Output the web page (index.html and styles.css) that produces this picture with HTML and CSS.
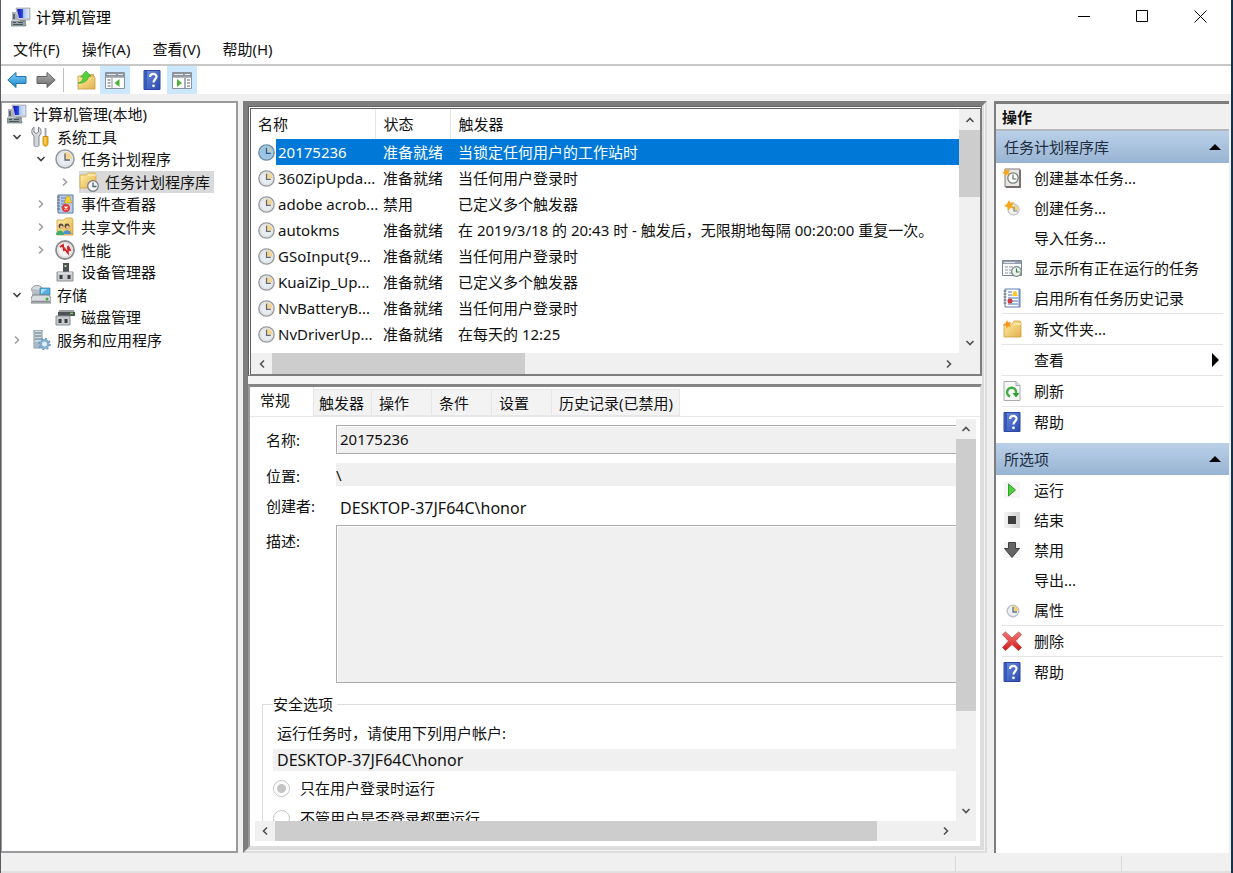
FILE: index.html
```
<!DOCTYPE html>
<html lang="zh-CN">
<head>
<meta charset="utf-8">
<title>计算机管理</title>
<link rel="stylesheet" href="styles.css">
</head>
<body>
<svg class="sprite" aria-hidden="true">
  <defs>
    <linearGradient id="gBlue" x1="0" y1="0" x2="0" y2="1"><stop offset="0" stop-color="#7fd0f5"/><stop offset="1" stop-color="#1a86cf"/></linearGradient>
    <linearGradient id="gGray" x1="0" y1="0" x2="0" y2="1"><stop offset="0" stop-color="#b0b0b0"/><stop offset="1" stop-color="#6a6a6a"/></linearGradient>
    <linearGradient id="gFolder" x1="0" y1="0" x2="1" y2="1"><stop offset="0" stop-color="#fff0a8"/><stop offset="1" stop-color="#e3b04a"/></linearGradient>
    <linearGradient id="gHelp" x1="0" y1="0" x2="1" y2="1"><stop offset="0" stop-color="#6d8fe0"/><stop offset="1" stop-color="#2a49b0"/></linearGradient>
    <linearGradient id="gScreen" x1="0" y1="0" x2="1" y2="0"><stop offset="0" stop-color="#1414b4"/><stop offset=".45" stop-color="#2b45dc"/><stop offset=".55" stop-color="#a8c6f4"/><stop offset="1" stop-color="#dce9fb"/></linearGradient>
    <linearGradient id="gRed" x1="0" y1="0" x2="0" y2="1"><stop offset="0" stop-color="#f47c78"/><stop offset="1" stop-color="#d01818"/></linearGradient>
    <linearGradient id="gBox" x1="0" y1="0" x2="1" y2="0"><stop offset="0" stop-color="#f4f4f4"/><stop offset="1" stop-color="#d2d2d2"/></linearGradient>
  </defs>
  <symbol id="i-computer" viewBox="0 0 20 20">
    <path d="M5 1h14v12H7z" fill="#c9ccd4" stroke="#8d919c" stroke-width=".6"/>
    <path d="M6 2h12v9H8z" fill="url(#gScreen)"/>
    <path d="M1 5h4l2 8H1z" fill="#a9b0ba"/><path d="M2 7h2v5H2z" fill="#5d6671"/>
    <path d="M9 13h6v2H9z" fill="#9b9fa6"/>
    <path d="M0 14h14l1 5H0z" fill="#97a3a4" stroke="#6e7b7c" stroke-width=".7"/>
    <path d="M2 15.5h3M7 15.5h5M2 17.5h10" stroke="#46555c" stroke-width="1"/>
  </symbol>
  <symbol id="i-back" viewBox="0 0 20 20"><path d="M.8 10 9 2.5V6.500h10v7H9v4z" fill="url(#gBlue)" stroke="#2672a6"/></symbol>
  <symbol id="i-forward" viewBox="0 0 20 20"><path d="M19.200 10 11 2.500v4H1v7h10v4z" fill="url(#gGray)" stroke="#606060"/></symbol>
  <symbol id="i-upfolder" viewBox="0 0 20 20">
    <path d="M2 6h16l1 2v11H2z" fill="url(#gFolder)" stroke="#c79b3d" stroke-width=".8"/>
    <path d="M12 4h6v3h-6z" fill="#d9b568"/>
    <path d="M2 13c4-1 5-4 5-6L4.500 7 10 1l5 5-2.500.5C12 11 7 14 2 13z" fill="#58cf3c" stroke="#379e24" stroke-width=".6"/>
  </symbol>
  <symbol id="i-paneleft" viewBox="0 0 20 17">
    <path d="M.5.500h19v16H.5z" fill="#fff" stroke="#8a929c"/><path d="M1 1h18v3.500H1z" fill="#8d959f"/><path d="M2 2.500h9M13 2.500h5" stroke="#e4e8ec"/>
    <path d="M1 5h18" stroke="#6c747e"/><path d="M7 6v10" stroke="#8a929c"/><path d="M2.500 8h3M2.500 11h3M2.500 14h3" stroke="#58616c"/>
    <path d="M14.500 7v8L9.500 11z" fill="#4eb23b"/>
  </symbol>
  <symbol id="i-paneright" viewBox="0 0 20 17">
    <path d="M.5.500h19v16H.5z" fill="#fff" stroke="#8a929c"/><path d="M1 1h18v3.500H1z" fill="#8d959f"/><path d="M2 2.500h9M13 2.500h5" stroke="#e4e8ec"/>
    <path d="M1 5h18" stroke="#6c747e"/><path d="M13 6v10" stroke="#8a929c" stroke-width="1.500"/><path d="M15 8h3M15 11h3M15 14h3" stroke="#58616c"/>
    <path d="M5 7v8l5-4z" fill="#4eb23b"/>
  </symbol>
  <symbol id="i-help" viewBox="0 0 20 20">
    <path d="M2 .5h16v19H2z" fill="url(#gHelp)" stroke="#2d479f"/><path d="M2.500 1h2.500v18H2.500z" fill="#3658b8"/>
    <path d="M8 7c0-4 6.500-4 6.500-.5 0 2.800-3 3-3 6" fill="none" stroke="#fff" stroke-width="2.200"/><circle cx="11.500" cy="15.800" r="1.400" fill="#fff"/>
  </symbol>
  <symbol id="i-tools" viewBox="0 0 20 20">
    <path d="M3 0v5l2 1.500L7.500 5V0C11 2 11 7 8 9v9c0 2.500-5 2.500-5 0V9C0 7 0 2 3 0z" fill="#d3d6da" stroke="#85898f"/>
    <path d="M13.500 1h2v9h-2z" fill="#a2a7ac"/><path d="M12 9.500h5v7c0 3.500-5 3.500-5 0z" fill="#f4b81e" stroke="#c07d0b" stroke-width=".8"/><path d="M14 10v7" stroke="#ffe489"/>
  </symbol>
  <symbol id="i-clock" viewBox="0 0 20 20">
    <circle cx="10" cy="10" r="9" fill="#f1f2f4" stroke="#96999f" stroke-width="1.600"/><circle cx="10" cy="10" r="7" fill="#e7edf3" stroke="#cdd2d8" stroke-width=".7"/>
    <path d="M10 10V3a7 7 0 0 1 7 7z" fill="#f3d58f"/><path d="M10 4.500V11h5" fill="none" stroke="#626770" stroke-width="1.400"/>
  </symbol>
  <symbol id="i-clocksel" viewBox="0 0 20 20">
    <circle cx="10" cy="10" r="9" fill="#a8cbe8" stroke="#6a8cab" stroke-width="1.600"/><circle cx="10" cy="10" r="7" fill="#9bc3e3"/>
    <path d="M10 10V3a7 7 0 0 1 7 7z" fill="#b9ccc4"/><path d="M10 4.500V11h5" fill="none" stroke="#2f5f8c" stroke-width="1.500"/>
  </symbol>
  <symbol id="i-folderclock" viewBox="0 0 20 20">
    <path d="M1 3h6l2-2h7l1 2v13H1z" fill="url(#gFolder)" stroke="#d2a448" stroke-width=".8"/><path d="M9 3h8" stroke="#fff7cf"/>
    <circle cx="14" cy="14" r="5.300" fill="#f4f5f7" stroke="#747b85" stroke-width="1.200"/><path d="M14 10.500V14.500h3.500" fill="none" stroke="#4d6272" stroke-width="1.300"/>
  </symbol>
  <symbol id="i-event" viewBox="0 0 20 20">
    <path d="M3 1h15v18H3z" fill="#b9cdea" stroke="#5f7a9f"/><path d="M2 3h3M2 6h3M2 9h3M2 12h3M2 15h3" stroke="#5c6470" stroke-width="1.200"/>
    <path d="M6 4h5M6 7h4M6 10h5M6 13h4" stroke="#5b7fc4"/><path d="M13 2c3 0 2 5 4 7H9c2-2 1-7 4-7z" fill="#f4d22c" stroke="#b8952a" stroke-width=".6"/>
    <circle cx="11" cy="14" r="4" fill="#e13a36"/><path d="M9.500 12.500l3 3m0-3-3 3" stroke="#fff" stroke-width="1.200"/>
  </symbol>
  <symbol id="i-share" viewBox="0 0 20 20">
    <path d="M2 3h7l2-2h6l1 2v15H2z" fill="url(#gFolder)" stroke="#cfa245" stroke-width=".8"/>
    <circle cx="6" cy="9" r="2.500" fill="#5b4a3b"/><circle cx="12" cy="9" r="2.500" fill="#5b4a3b"/><circle cx="6.500" cy="10" r="1.500" fill="#f0c49c"/><circle cx="12.500" cy="10" r="1.500" fill="#f0c49c"/>
    <path d="M1 18c0-6 8-6 8 0z" fill="#3fae72"/><path d="M8 17c0-5 8-5 8 0z" fill="#4a8fd0"/>
  </symbol>
  <symbol id="i-perf" viewBox="0 0 20 20">
    <circle cx="10" cy="10" r="9" fill="#fff" stroke="#888b90" stroke-width="1.800"/><circle cx="10" cy="10" r="7.200" fill="#f7f2f2" stroke="#cdb9b9" stroke-width=".6"/>
    <path d="M5 7l3-2 1 6M7 5.500l6 7.500V6l2.500 5" fill="none" stroke="#d81e1e" stroke-width="1.700"/>
  </symbol>
  <symbol id="i-device" viewBox="0 0 20 20">
    <path d="M8 1h6v10H8z" fill="#4d5154"/><path d="M9.500 3h2v2h-2z" fill="#b7d6a0"/>
    <path d="M2 10h16v9H2z" fill="#c8cacd" stroke="#8b8e92"/><path d="M4.500 13h3v4h-3zM12.500 13h3v4h-3z" fill="#3b3e41"/><path d="M3 11h14" stroke="#f3f3f3"/>
  </symbol>
  <symbol id="i-storage" viewBox="0 0 20 20">
    <ellipse cx="6" cy="4.500" rx="5.500" ry="4" fill="#d8dce0" stroke="#979ca3"/><path d="M1 4v6h9V5z" fill="#b8bdc4"/>
    <path d="M9 3h10v7H9z" fill="#55aee0" stroke="#2f7cae" stroke-width=".7"/><path d="M10 4h6l-6 5z" fill="#a6dcf6"/>
    <path d="M2 10h16l2 3v5H0v-5z" fill="#dadcdf" stroke="#7e8287"/><path d="M1 16.500h18" stroke="#8a8d91" stroke-width="1.500"/><circle cx="16" cy="14" r="1.500" fill="#3fae35"/>
  </symbol>
  <symbol id="i-disk" viewBox="0 0 20 20">
    <path d="M4 3h15l1 5H3z" fill="#9ba0a5"/><path d="M3 5h17v4H3z" fill="#4c5155"/><path d="M15 6.500h3" stroke="#7cd05a" stroke-width="1.500"/>
    <path d="M1 9h14v9H1z" fill="#c8cacd" stroke="#8b8e92"/><path d="M3.500 12h3v4h-3zM9.500 12h3v4h-3z" fill="#3b3e41"/>
  </symbol>
  <symbol id="i-services" viewBox="0 0 20 20">
    <path d="M3 0h8v18H3z" fill="#ccd8df" stroke="#7f919c"/><path d="M4 3h6M4 6h6M4 9h6" stroke="#657782" stroke-width="1.200"/><path d="M4 12h6v5H4z" fill="#a9bbc5"/>
    <circle cx="13.500" cy="14" r="3.800" fill="#e4eef6" stroke="#7faed0" stroke-width="2.600"/><circle cx="13.500" cy="14" r="5.500" fill="none" stroke="#6898bd" stroke-width="1.600" stroke-dasharray="2 2.300"/>
  </symbol>
  <symbol id="i-newbasic" viewBox="0 0 20 20">
    <path d="M3 1h15v18H3z" fill="#e9e6e4" stroke="#82797a"/><path d="M18 2v17H4" fill="none" stroke="#756b6c" stroke-width="1.800"/>
    <circle cx="11" cy="10" r="5.200" fill="#fff" stroke="#73817d" stroke-width="1.300"/><path d="M11 6.500V11h3.500" fill="none" stroke="#55705f" stroke-width="1.200"/>
    <path d="M4 0l1 2.500L8 2 6.500 4.500 8 7 5 6.200 3.500 9 3 6 0 5l2.600-1.500z" fill="#f7a51d"/>
  </symbol>
  <symbol id="i-newtask" viewBox="0 0 20 20">
    <circle cx="11.500" cy="11.500" r="5.500" fill="#f6f2ea" stroke="#bfc6cd" stroke-width="1.300"/><path d="M12 12V7a5 5 0 0 1 5 5z" fill="#f2d48b"/><path d="M12 8.500V13h3.500" fill="none" stroke="#6e7d8a" stroke-width="1.200"/>
    <path d="M7 2l1.400 2.800L12 4l-1.800 3.500L12 11 8.500 9.700 6 13 5.400 9.200 2 8l3-2z" fill="#f7a51d"/>
  </symbol>
  <symbol id="i-running" viewBox="0 0 20 20">
    <path d="M.5 2.500h19v15H.5z" fill="#fbfbfc" stroke="#7f8794"/><path d="M1 3h18v3H1z" fill="#96a0ae"/><path d="M2 4.500h11" stroke="#dfe4ea"/>
    <path d="M3 9h3M7 9h4M12 9h5M3 12h3M7 12h3M3 15h3M7 15h3" stroke="#8b94a2"/>
    <circle cx="14.500" cy="13.500" r="4.800" fill="#f0f3f0" stroke="#778a84" stroke-width="1.200"/><path d="M14.500 10.500V14h3" fill="none" stroke="#2f8046" stroke-width="1.200"/>
  </symbol>
  <symbol id="i-history" viewBox="0 0 20 20">
    <path d="M3 1h15v18H3z" fill="#fff" stroke="#5f7fb4"/><path d="M16.500 1H18v18h-1.500z" fill="#6d8fc8"/><path d="M1.500 3h3M1.500 6h3M1.500 9h3M1.500 12h3M1.500 15h3" stroke="#5c6470" stroke-width="1.200"/>
    <path d="M6 4h4M6 7h4M6 10h10M6 13h10M6 16h10" stroke="#4c6eb0"/><path d="M13 3c2.500 0 1.500 3 3 5h-6c1.500-2 .5-5 3-5z" fill="#f8c928"/><circle cx="8" cy="13" r="2.500" fill="#d63a36"/>
  </symbol>
  <symbol id="i-newfolder" viewBox="0 0 20 20">
    <path d="M2 5h8l2-3h6l1 2v14H2z" fill="url(#gFolder)" stroke="#d2a043" stroke-width=".8"/><path d="M11 5h8" stroke="#fff3bd" stroke-width="1.300"/>
    <path d="M5 1l1.200 2.500L9 3 7.600 5.500 9 8 6 7.200 4.500 10 4 7 1 6l2.600-1.500z" fill="#f7951d"/>
  </symbol>
  <symbol id="i-refresh" viewBox="0 0 20 20">
    <path d="M2 .5h12l4 4v15H2z" fill="#f6f7f6" stroke="#a6abad"/><path d="M14 .5v4h4" fill="#dfe3e4" stroke="#a6abad"/>
    <path d="M8 15.500A4.500 4.500 0 1 1 14 12" fill="none" stroke="#3fae42" stroke-width="2.500"/><path d="M10.500 12h7L14 16.500z" fill="#2f9c34"/>
  </symbol>
  <symbol id="i-run" viewBox="0 0 20 20"><path d="M2 2h16v16H2z" fill="#f5f5f5"/><path d="M6.500 4v12l7-6z" fill="#52cf3c" stroke="#2f9e2c"/></symbol>
  <symbol id="i-end" viewBox="0 0 20 20"><path d="M2 2h16v16H2z" fill="url(#gBox)"/><path d="M6 6h8v8H6z" fill="#3d3d3d"/></symbol>
  <symbol id="i-disable" viewBox="0 0 20 20"><path d="M2 2h16v16H2z" fill="#f5f5f5"/><path d="M6.500 2.500h7v6h4L10 17.500 2.500 8.500h4z" fill="#646464" stroke="#3f3f3f"/></symbol>
  <symbol id="i-props" viewBox="0 0 20 20">
    <circle cx="11" cy="11" r="5.800" fill="#edf0f3" stroke="#b9c2cc" stroke-width="1.400"/><path d="M11 11V5.500a5.500 5.500 0 0 1 5.500 5.500z" fill="#f3cf80"/><path d="M11 7v5h4" fill="none" stroke="#60758c" stroke-width="1.300"/>
  </symbol>
  <symbol id="i-delete" viewBox="0 0 20 20"><path d="M3.500 1 10 7l6.500-6L19.500 3.500 13.500 10l6 6.500-3 3L10 13.500l-6.500 6-3-3 6-6.500-6-6.500z" fill="url(#gRed)" stroke="#b53030" stroke-width=".7" stroke-linejoin="round"/></symbol>
  <symbol id="a-up" viewBox="0 0 10 10"><path d="M1.500 7 5 3.500 8.500 7" fill="none" stroke="currentColor" stroke-width="1.600"/></symbol>
  <symbol id="a-down" viewBox="0 0 10 10"><path d="M1.500 3 5 6.500 8.500 3" fill="none" stroke="currentColor" stroke-width="1.600"/></symbol>
  <symbol id="a-left" viewBox="0 0 10 10"><path d="M7 1.500 3.500 5 7 8.500" fill="none" stroke="currentColor" stroke-width="1.600"/></symbol>
  <symbol id="a-right" viewBox="0 0 10 10"><path d="M3 1.500 6.500 5 3 8.500" fill="none" stroke="currentColor" stroke-width="1.600"/></symbol>
</svg>

<div class="window">
  <header class="titlebar">
    <svg class="icon"><use href="#i-computer"/></svg>
    <h1 class="title">计算机管理</h1>
    <div class="controls">
      <button class="control" aria-label="最小化"><svg class="glyph" viewBox="0 0 13 13"><path d="M0 6.500h12"/></svg></button>
      <button class="control" aria-label="最大化"><svg class="glyph" viewBox="0 0 13 13"><path d="M.5.500h11v11H.5z"/></svg></button>
      <button class="control" aria-label="关闭"><svg class="glyph" viewBox="0 0 13 13"><path d="M.5.500l12 12M12.500.500l-12 12"/></svg></button>
    </div>
  </header>
  <nav class="menubar">
    <button class="menu">文件(F)</button>
    <button class="menu">操作(A)</button>
    <button class="menu">查看(V)</button>
    <button class="menu">帮助(H)</button>
  </nav>
  <div class="toolbar">
    <button class="tool" aria-label="后退"><svg class="icon"><use href="#i-back"/></svg></button>
    <button class="tool" aria-label="前进"><svg class="icon"><use href="#i-forward"/></svg></button>
    <span class="tool-sep"></span>
    <button class="tool" aria-label="上移"><svg class="icon"><use href="#i-upfolder"/></svg></button>
    <button class="tool on" aria-label="显示控制台树"><svg class="icon"><use href="#i-paneleft"/></svg></button>
    <button class="tool book" aria-label="帮助"><svg class="icon"><use href="#i-help"/></svg></button>
    <button class="tool on" aria-label="显示操作窗格"><svg class="icon"><use href="#i-paneright"/></svg></button>
  </div>

  <main class="workspace">
    <aside class="tree-pane">
      <div class="tree" role="tree">
        <div class="node root" role="treeitem"><svg class="icon"><use href="#i-computer"/></svg><span>计算机管理(本地)</span></div>
        <div class="node" role="treeitem"><button class="twist open" aria-label="折叠"><svg class="arrow"><use href="#a-down"/></svg></button><svg class="icon"><use href="#i-tools"/></svg><span>系统工具</span></div>
        <div class="node l2" role="treeitem"><button class="twist open" aria-label="折叠"><svg class="arrow"><use href="#a-down"/></svg></button><svg class="icon"><use href="#i-clock"/></svg><span>任务计划程序</span></div>
        <div class="node l3" role="treeitem" aria-selected="true"><button class="twist" aria-label="展开"><svg class="arrow"><use href="#a-right"/></svg></button><span class="selected"><svg class="icon"><use href="#i-folderclock"/></svg><span>任务计划程序库</span></span></div>
        <div class="node l2" role="treeitem"><button class="twist" aria-label="展开"><svg class="arrow"><use href="#a-right"/></svg></button><svg class="icon"><use href="#i-event"/></svg><span>事件查看器</span></div>
        <div class="node l2" role="treeitem"><button class="twist" aria-label="展开"><svg class="arrow"><use href="#a-right"/></svg></button><svg class="icon"><use href="#i-share"/></svg><span>共享文件夹</span></div>
        <div class="node l2" role="treeitem"><button class="twist" aria-label="展开"><svg class="arrow"><use href="#a-right"/></svg></button><svg class="icon"><use href="#i-perf"/></svg><span>性能</span></div>
        <div class="node l2" role="treeitem"><span class="twist"></span><svg class="icon"><use href="#i-device"/></svg><span>设备管理器</span></div>
        <div class="node" role="treeitem"><button class="twist open" aria-label="折叠"><svg class="arrow"><use href="#a-down"/></svg></button><svg class="icon"><use href="#i-storage"/></svg><span>存储</span></div>
        <div class="node l2" role="treeitem"><span class="twist"></span><svg class="icon"><use href="#i-disk"/></svg><span>磁盘管理</span></div>
        <div class="node" role="treeitem"><button class="twist" aria-label="展开"><svg class="arrow"><use href="#a-right"/></svg></button><svg class="icon"><use href="#i-services"/></svg><span>服务和应用程序</span></div>
      </div>
    </aside>

    <section class="center">
      <div class="list-pane">
        <div class="list-view">
          <table class="tasks">
            <colgroup><col class="c-icon"><col class="c-name"><col class="c-state"><col></colgroup>
            <thead><tr><th colspan="2" class="first">名称</th><th>状态</th><th>触发器</th></tr></thead>
            <tbody>
              <tr class="active"><td class="ic"><svg class="icon small"><use href="#i-clocksel"/></svg></td><td class="nm">20175236</td><td>准备就绪</td><td>当锁定任何用户的工作站时</td></tr>
              <tr><td class="ic"><svg class="icon small"><use href="#i-clock"/></svg></td><td class="nm">360ZipUpda...</td><td>准备就绪</td><td>当任何用户登录时</td></tr>
              <tr><td class="ic"><svg class="icon small"><use href="#i-clock"/></svg></td><td class="nm">adobe acrob...</td><td>禁用</td><td>已定义多个触发器</td></tr>
              <tr><td class="ic"><svg class="icon small"><use href="#i-clock"/></svg></td><td class="nm">autokms</td><td>准备就绪</td><td>在 2019/3/18 的 20:43 时 - 触发后，无限期地每隔 00:20:00 重复一次。</td></tr>
              <tr><td class="ic"><svg class="icon small"><use href="#i-clock"/></svg></td><td class="nm">GSoInput{9...</td><td>准备就绪</td><td>当任何用户登录时</td></tr>
              <tr><td class="ic"><svg class="icon small"><use href="#i-clock"/></svg></td><td class="nm">KuaiZip_Up...</td><td>准备就绪</td><td>已定义多个触发器</td></tr>
              <tr><td class="ic"><svg class="icon small"><use href="#i-clock"/></svg></td><td class="nm">NvBatteryB...</td><td>准备就绪</td><td>当任何用户登录时</td></tr>
              <tr><td class="ic"><svg class="icon small"><use href="#i-clock"/></svg></td><td class="nm">NvDriverUp...</td><td>准备就绪</td><td>在每天的 12:25</td></tr>
            </tbody>
          </table>
        </div>
        <div class="vbar"><button class="step" aria-label="向上"><svg class="arrow"><use href="#a-up"/></svg></button><div class="track"><div class="thumb list-v"></div></div><button class="step" aria-label="向下"><svg class="arrow"><use href="#a-down"/></svg></button></div>
        <div class="hbar"><button class="step" aria-label="向左"><svg class="arrow"><use href="#a-left"/></svg></button><div class="track"><div class="thumb list-h"></div></div><button class="step" aria-label="向右"><svg class="arrow"><use href="#a-right"/></svg></button></div>
        <div class="corner"></div>
      </div>

      <div class="detail-pane">
        <div class="tabs" role="tablist">
          <button class="tab current" role="tab" aria-selected="true">常规</button>
          <button class="tab tight" role="tab">触发器</button>
          <button class="tab" role="tab">操作</button>
          <button class="tab" role="tab">条件</button>
          <button class="tab" role="tab">设置</button>
          <button class="tab long" role="tab">历史记录(已禁用)</button>
        </div>
        <div class="detail-body">
          <form class="form-view">
            <div class="fields">
              <label for="f-name">名称:</label><input id="f-name" class="box" value="20175236" readonly>
              <label for="f-place" class="low">位置:</label><input id="f-place" class="flat" value="\" readonly>
              <label for="f-author">创建者:</label><output id="f-author" class="author">DESKTOP-37JF64C\honor</output>
              <label for="f-desc" class="top">描述:</label><textarea id="f-desc" class="desc" readonly></textarea>
            </div>
            <fieldset class="security">
              <legend>安全选项</legend>
              <label class="hint" for="f-user">运行任务时，请使用下列用户帐户:</label>
              <input id="f-user" class="user" value="DESKTOP-37JF64C\honor" readonly>
              <label class="option"><input type="radio" name="logon" checked disabled>只在用户登录时运行</label>
              <label class="option"><input type="radio" name="logon" disabled>不管用户是否登录都要运行</label>
            </fieldset>
          </form>
          <div class="vbar"><button class="step" aria-label="向上"><svg class="arrow"><use href="#a-up"/></svg></button><div class="track"><div class="thumb form-v"></div></div><button class="step" aria-label="向下"><svg class="arrow"><use href="#a-down"/></svg></button></div>
          <div class="hbar"><button class="step" aria-label="向左"><svg class="arrow"><use href="#a-left"/></svg></button><div class="track"><div class="thumb form-h"></div></div><button class="step" aria-label="向右"><svg class="arrow"><use href="#a-right"/></svg></button></div>
          <div class="corner"></div>
        </div>
      </div>
    </section>

    <aside class="actions">
      <h2 class="actions-title">操作</h2>
      <button class="group">任务计划程序库<span class="tri-up"></span></button>
      <div class="items">
        <button class="item"><svg class="icon"><use href="#i-newbasic"/></svg>创建基本任务...</button>
        <button class="item"><svg class="icon"><use href="#i-newtask"/></svg>创建任务...</button>
        <button class="item"><span class="icon"></span>导入任务...</button>
        <button class="item"><svg class="icon"><use href="#i-running"/></svg>显示所有正在运行的任务</button>
        <button class="item"><svg class="icon"><use href="#i-history"/></svg>启用所有任务历史记录</button>
        <hr>
        <button class="item"><svg class="icon"><use href="#i-newfolder"/></svg>新文件夹...</button>
        <hr>
        <button class="item"><span class="icon"></span>查看<span class="tri-right"></span></button>
        <hr>
        <button class="item"><svg class="icon"><use href="#i-refresh"/></svg>刷新</button>
        <hr>
        <button class="item"><svg class="icon"><use href="#i-help"/></svg>帮助</button>
      </div>
      <button class="group">所选项<span class="tri-up"></span></button>
      <div class="items">
        <button class="item"><svg class="icon"><use href="#i-run"/></svg>运行</button>
        <button class="item"><svg class="icon"><use href="#i-end"/></svg>结束</button>
        <button class="item"><svg class="icon"><use href="#i-disable"/></svg>禁用</button>
        <button class="item"><span class="icon"></span>导出...</button>
        <button class="item"><svg class="icon"><use href="#i-props"/></svg>属性</button>
        <hr>
        <button class="item"><svg class="icon"><use href="#i-delete"/></svg>删除</button>
        <hr>
        <button class="item"><svg class="icon"><use href="#i-help"/></svg>帮助</button>
      </div>
    </aside>
  </main>
  <footer class="status"><span class="cell wide"></span><span class="cell"></span><span class="cell last"></span></footer>
</div>
</body>
</html>
```
FILE: styles.css
```
* { box-sizing: border-box; }

body {
  margin: 0;
  background: #f0f0f0;
  color: #111;
  font: 15px/20px "Noto Sans", "Noto Sans CJK SC", sans-serif;
}

button, input, textarea { font: inherit; color: inherit; }
button { border: 0; padding: 0; margin: 0; background: none; }

.sprite { position: absolute; width: 0; height: 0; }
.icon { width: 20px; height: 20px; flex: none; }
.icon.small { width: 17px; height: 17px; display: block; }
.arrow { width: 10px; height: 10px; display: block; }

.window {
  display: flex;
  flex-direction: column;
  height: 100vh;
  border-left: 1px solid #5a5a62;
  border-right: 2px solid #16324a;
  background: #f0f0f0;
}

/* Title, menu and tool bars */
.titlebar { display: flex; align-items: center; gap: 5px; height: 33px; padding-left: 10px; background: #fff; }
.title { margin: 0; font-size: 15px; font-weight: 400; color: #000; }
.controls { display: flex; margin: 0 2px 0 auto; }
.control { width: 58px; height: 33px; display: flex; align-items: center; justify-content: center; }
.glyph { width: 13px; height: 13px; fill: none; stroke: #000; }

.menubar { display: flex; gap: 22px; height: 33px; padding: 1px 12px 0; background: #fff; border-bottom: 2px solid #c8c8c8; }
.toolbar { display: flex; align-items: center; height: 28px; padding-left: 1px; background: #fff; }
.tool { width: 29px; height: 28px; display: flex; align-items: center; justify-content: center; }
.tool.on { width: 30px; background: #cce8ff; }
.tool.on .icon { height: 17px; }
.tool.book { width: 37px; padding-left: 6px; }
.tool-sep { width: 1px; height: 24px; margin: 0 7px 0 3px; background: #bdbdbd; }

.workspace {
  flex: 1;
  min-height: 0;
  display: grid;
  grid-template-columns: 237px minmax(0, 1fr) 235px;
  grid-template-rows: minmax(0, 1fr);
  gap: 5px;
  padding: 7px 2px 0 0;
}

/* Console tree */
.tree-pane { background: #fff; border: 2px solid #9a9a9c; border-left-width: 1px; overflow: hidden; }
.tree { display: grid; grid-auto-rows: 1fr; height: 248px; }
.node { display: flex; align-items: center; gap: 6px; padding-left: 7px; white-space: nowrap; }
.node.root { padding-left: 5px; }
.node.l2 { padding-left: 31px; }
.node.l3 { padding-left: 55px; }
.twist { width: 16px; display: flex; justify-content: center; color: #a0a0a0; }
.twist.open { color: #404040; }
.selected { display: flex; align-items: center; gap: 6px; padding: 1px 4px 1px 0; background: #d9d9d9; }

/* Centre frame with its two stacked panes */
.center {
  display: grid;
  grid-template-rows: 270px minmax(0, 1fr);
  gap: 8px;
  margin-right: 2px;
  border: 5px solid;
  border-style: solid double double solid;
  border-color: #7d7d7d #dcdcdc #dcdcdc #7d7d7d;
  background: #f4f4f4;
}
.list-pane {
  display: grid;
  grid-template: minmax(0, 1fr) 21px / minmax(0, 1fr) 21px;
  border: 2px solid #7d7d7d;
  border-top: 3px double #5f5f5f;
  border-left: 3px double #5f5f5f;
  background: #fff;
}
.list-view { overflow: hidden; }
.tasks { width: 100%; table-layout: fixed; border-collapse: collapse; white-space: nowrap; }
.c-icon { width: 25px; }
.c-name { width: 99px; }
.c-state { width: 75px; }
.tasks th { height: 30px; padding: 0 8px; text-align: left; font-weight: 400; border-right: 1px solid #e4e4e4; }
.tasks th.first { padding-left: 7px; }
.tasks th:last-child { border-right: 0; }
.tasks td { height: 26px; padding: 0 0 0 8px; }
.tasks td.ic { padding-left: 7px; }
.tasks td.nm { padding-left: 2px; }
.tasks .active td { background: #0078d7; color: #fff; }
.tasks .active td.ic { background: #fff; }

/* Scroll bars */
.vbar, .hbar { display: flex; background: #f0f0f0; }
.vbar { flex-direction: column; }
.corner { background: #f0f0f0; }
.track { flex: 1; }
.thumb { background: #cdcdcd; }
.step { width: 21px; height: 21px; flex: none; display: flex; align-items: center; justify-content: center; color: #505050; }
.detail-body .step { width: 20px; height: 20px; }
.list-v { height: 33%; }
.list-h { width: 38%; height: 100%; }
.form-v { height: 75%; }
.form-h { width: 91%; height: 100%; }

/* Properties pane */
.detail-pane {
  display: flex;
  flex-direction: column;
  min-height: 0;
  border-top: 3px solid #858585;
  border-left: 2px solid #9a9a9a;
  border-right: 2px solid #dedede;
  border-bottom: 2px solid #dedede;
  background: #fff;
}
.tabs { display: flex; align-items: flex-end; flex: none; height: 30px; border-bottom: 1px solid #e8e8e8; }
.tab { width: 60px; height: 27px; padding-left: 7px; text-align: left; white-space: nowrap; background: #f3f3f3; border: 1px solid #e6e6e6; border-left: 0; }
.tab.current { width: 64px; height: 29px; padding: 0 0 3px 10px; background: #fff; border: 0; border-right: 1px solid #e6e6e6; }
.tab.tight { width: 58px; padding-left: 5px; }
.tab.long { width: auto; padding: 0 6px 0 7px; }

.detail-body {
  flex: 1;
  min-height: 0;
  display: grid;
  grid-template: minmax(0, 1fr) 20px / minmax(0, 1fr) 20px;
  padding: 2px 4px 5px 5px;
}
.form-view { overflow: hidden; padding: 6px 0 0 7px; }
.fields { display: grid; grid-template-columns: 70px 1fr; padding-left: 4px; }
.fields label { align-self: center; }
.fields label.low { align-self: end; }
.fields label.top { align-self: start; padding-top: 6px; }
.box, .flat, .user { border: 0; border-radius: 0; outline: 0; background: #f0f0f0; }
.box { height: 29px; padding: 0 4px 2px 3px; border: 1px solid #ababab; border-right: 0; box-shadow: inset 1px 1px #fff; }
.flat { height: 23px; margin-top: 9px; padding: 0; }
.flat, .author { min-width: 0; }
.author { display: block; padding: 12px 4px 7px; }
.author, .user { font-size: 16px; }
.desc { height: 158px; resize: none; outline: 0; border: 1px solid #ababab; border-right: 0; border-radius: 0; background: #f0f0f0; box-shadow: inset 1px 1px #fff; }
.security { min-width: 0; margin: 11px 0 0; padding: 9px 0 0 10px; border: 1px solid #dcdcdc; border-right: 0; }
.security legend { padding: 0 4px 0 0; }
.hint { display: block; padding-left: 4px; }
.user { display: block; width: 100%; height: 22px; margin: 6px 0; padding: 0 4px; }
.option { display: flex; align-items: center; gap: 10px; height: 22px; margin-bottom: 8px; }
.option input {
  appearance: none;
  width: 17px;
  height: 17px;
  margin: 0;
  border: 1px solid #c4c4c4;
  border-radius: 50%;
  background: #fff;
}
.option input:checked { background: radial-gradient(circle, #c4c4c4 0 4px, #fff 5px); }

/* Actions pane */
.actions { background: #fff; border-top: 3px solid #7d7d7d; border-left: 2px solid #7d7d7d; overflow: hidden; }
.actions-title { margin: 0; height: 27px; padding: 3px 6px 0; font-size: 15px; font-weight: 700; background: #f0f0f0; border-bottom: 2px solid #b4b8bd; }
.group {
  display: flex;
  align-items: center;
  justify-content: space-between;
  width: 100%;
  height: 32px;
  padding: 0 8px;
  background: linear-gradient(#bad0e8, #98b4d3);
  color: #1d2c40;
}
.tri-up { border: 6px solid transparent; border-top: 0; border-bottom: 6px solid #000; }
.tri-right { margin: 0 4px 0 auto; border: 7px solid transparent; border-right: 0; border-left: 7px solid #000; }
.items { padding: 0 6px 6px; }
.item { display: flex; align-items: center; gap: 12px; width: 100%; height: 30px; text-align: left; white-space: nowrap; }
.items hr { height: 1px; margin: 0; border: 0; background: #e4e4e4; }

/* Status bar */
.status { display: flex; flex: none; height: 20px; padding-top: 3px; border-bottom: 2px solid #e0e0e0; }
.cell { width: 166px; border-right: 1px solid #d8d8d8; }
.cell.wide { flex: 1; }
.cell.last { width: 109px; border-right: 0; }
```
